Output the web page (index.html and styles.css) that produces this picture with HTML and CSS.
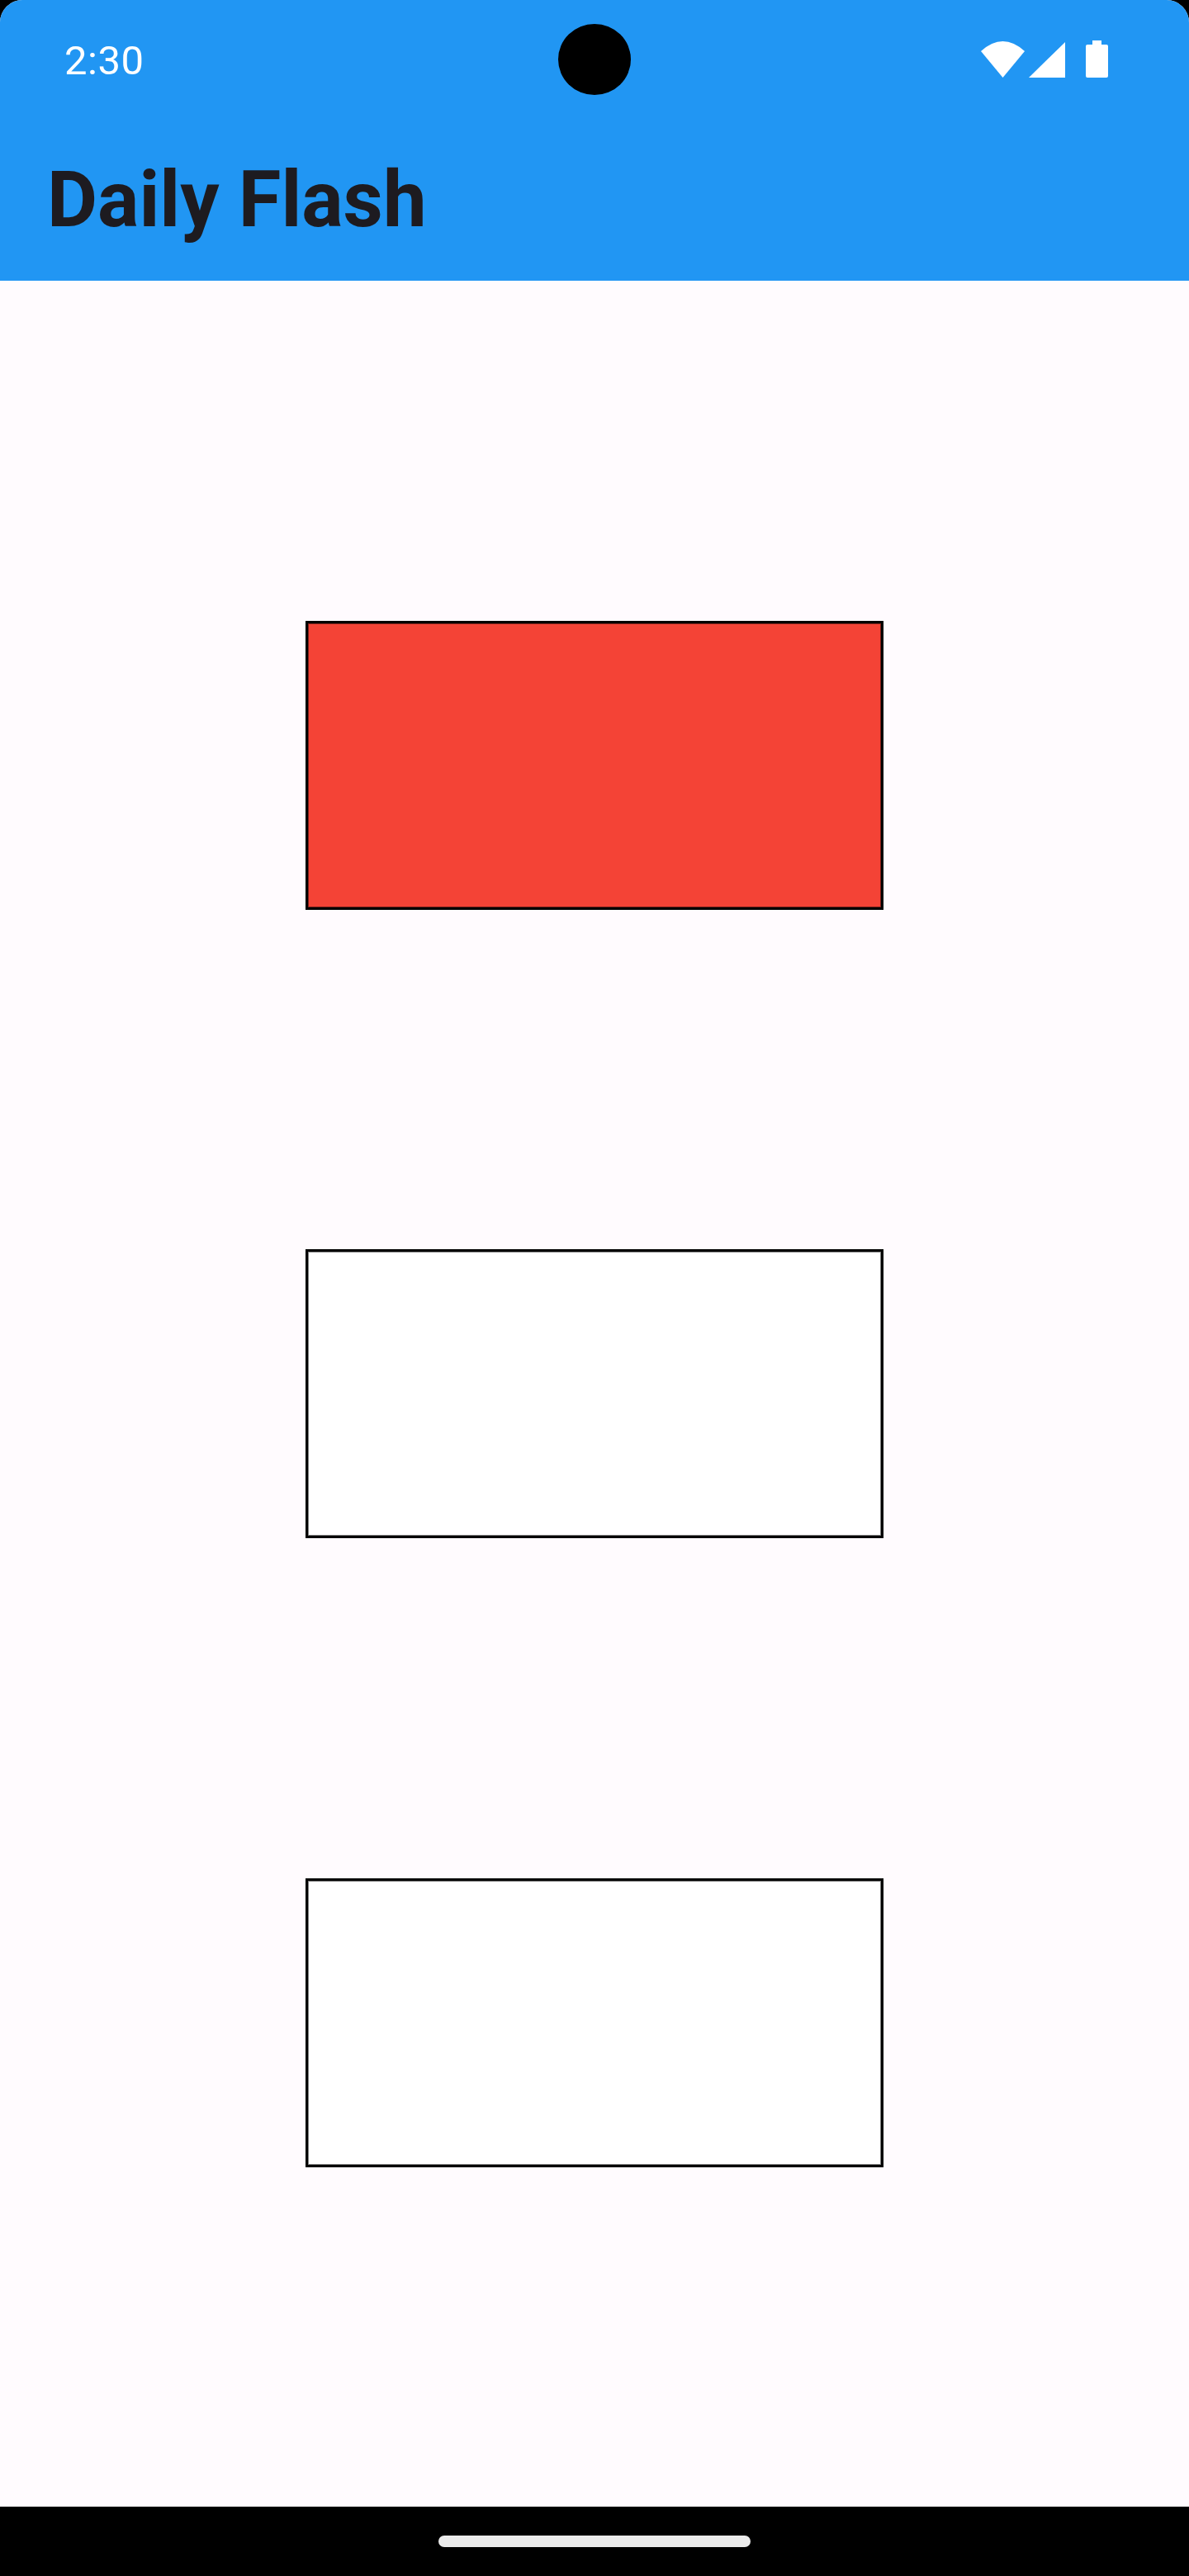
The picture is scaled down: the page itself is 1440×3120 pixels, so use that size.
FILE: index.html
```html
<!DOCTYPE html>
<html lang="en">
<head>
    <meta charset="UTF-8">
    <meta name="viewport" content="width=device-width, initial-scale=1.0">
    <title>Daily Flash</title>
    <link rel="stylesheet" href="styles.css">
</head>
<body>
    <div class="screen">
        <header class="app-bar">
            <div class="status-bar">
                <span class="time">2:30</span>
                <div class="status-icons">
                    <svg class="icon-wifi" width="53" height="44" viewBox="0 0 53 44"><path d="M26.5 44L0 12Q26.5-12 53 12Z" fill="#fff"/></svg>
                    <svg class="icon-signal" width="44" height="43" viewBox="0 0 44 43"><path d="M0 43L44 0V43Z" fill="#fff"/></svg>
                    <svg class="icon-battery" width="27" height="45" viewBox="0 0 27 45"><path d="M8 0H19V5H25Q27 5 27 7V43Q27 45 25 45H2Q0 45 0 43V7Q0 5 2 5H8Z" fill="#fff"/></svg>
                </div>
            </div>
            <h1 class="title">Daily Flash</h1>
        </header>
        <div class="camera"></div>

        <main class="lights">
            <div class="light light-on"></div>
            <div class="light"></div>
            <div class="light"></div>
        </main>

        <footer class="nav-bar">
            <div class="home-handle"></div>
        </footer>
    </div>
</body>
</html>
```

FILE: styles.css
```css
* {
    box-sizing: border-box;
}
html, body {
    margin: 0;
    height: 100%;
    background: #000;
}
.screen {
    position: relative;
    display: flex;
    flex-direction: column;
    height: 3120px;
    background: #fffbfe;
    border-radius: 27px 27px 0 0;
    overflow: hidden;
    font-family: Roboto, "Liberation Sans", sans-serif;
}
.app-bar {
    height: 340px;
    padding: 0 98px 0 57px;
    background: #2196f3;
}
.status-bar {
    display: flex;
    justify-content: space-between;
    height: 188px;
    padding: 48px 0 0 21px;
}
.time {
    font-size: 49px;
    line-height: 52px;
    letter-spacing: 0.5px;
    color: #fff;
}
.status-icons {
    display: flex;
    align-items: flex-end;
    height: 46px;
}
.icon-signal {
    margin-left: 5px;
}
.icon-battery {
    margin-left: 25px;
}
.title {
    margin: 0;
    font-size: 94px;
    line-height: 108px;
    font-weight: 700;
    color: #1d1b20;
}
.camera {
    position: absolute;
    top: 29px;
    left: 676px;
    width: 88px;
    height: 86px;
    border-radius: 50%;
    background: #000;
}
.lights {
    flex: 1;
    display: flex;
    flex-direction: column;
    justify-content: space-evenly;
    align-items: center;
}
.light {
    width: 700px;
    height: 350px;
    background: #fff;
    border: 3px solid #000;
    box-shadow: inset 0 0 0 1px rgba(0, 0, 0, 0.5);
}
.light-on {
    background: #f44336;
}
.nav-bar {
    display: flex;
    justify-content: center;
    height: 84px;
    padding-top: 35px;
    background: #000;
}
.home-handle {
    width: 378px;
    height: 14px;
    border-radius: 7px;
    background: #ebebeb;
}
```
